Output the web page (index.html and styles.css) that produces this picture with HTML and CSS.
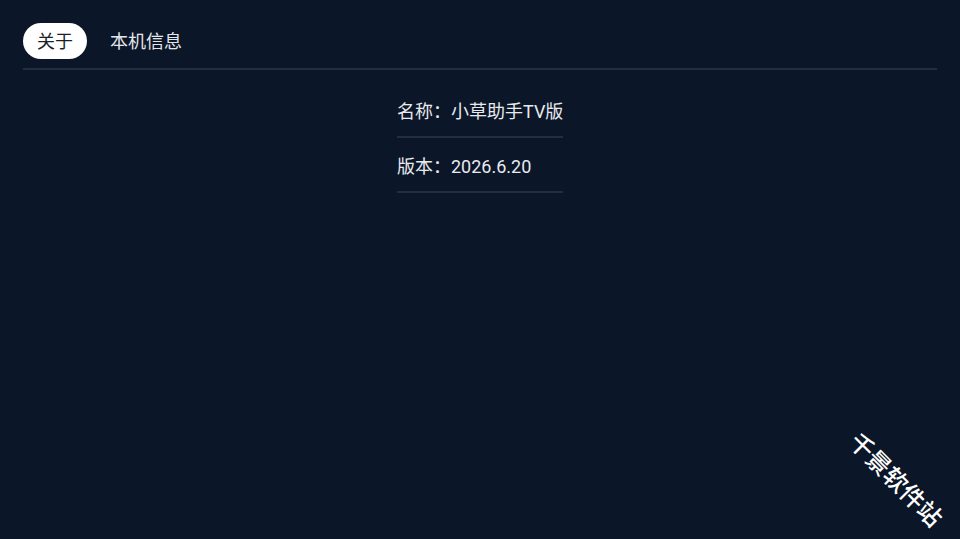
FILE: index.html
```html
<!DOCTYPE html>
<html lang="zh-CN">
<head>
  <meta charset="UTF-8">
  <meta name="viewport" content="width=device-width, initial-scale=1.0">
  <title>关于</title>
  <link rel="stylesheet" href="styles.css">
</head>
<body>

<div class="tabs">
  <div class="tab active">关于</div>
  <div class="tab">本机信息</div>
</div>

<div class="info">
  <div class="info-row">名称：小草助手TV版</div>
  <div class="info-row">版本：2026.6.20</div>
</div>

<div class="watermark">千景软件站</div>

</body>
</html>
```

FILE: styles.css
```css
html, body {
  margin: 0;
  height: 100%;
}
body {
  background: #0b1628;
  color: #e8eaee;
  font-family: Roboto, "Noto Sans CJK SC", sans-serif;
  overflow: hidden;
  position: relative;
}
.tabs {
  display: flex;
  align-items: center;
  gap: 9px;
  margin: 0 23px;
  padding-top: 23px;
  padding-bottom: 9px;
  border-bottom: 2px solid #262e3e;
}
.tab {
  height: 36px;
  line-height: 37px;
  padding: 0 14px;
  border-radius: 18px;
  font-size: 18px;
  color: #e4e6ea;
}
.tab.active {
  background: #fff;
  color: #1a1f2a;
}
.info {
  width: 166px;
  margin: 22px auto 0;
}
.info-row {
  font-size: 18px;
  line-height: 24px;
  padding: 8px 0 12px;
  border-bottom: 2px solid #262e3e;
  margin-bottom: 9px;
  white-space: nowrap;
}
.watermark {
  position: absolute;
  left: 837px;
  top: 461px;
  width: 120px;
  text-align: center;
  font-size: 24px;
  font-weight: 500;
  font-family: "Noto Sans CJK SC", sans-serif;
  color: #fff;
  transform: rotate(45deg);
}
```
